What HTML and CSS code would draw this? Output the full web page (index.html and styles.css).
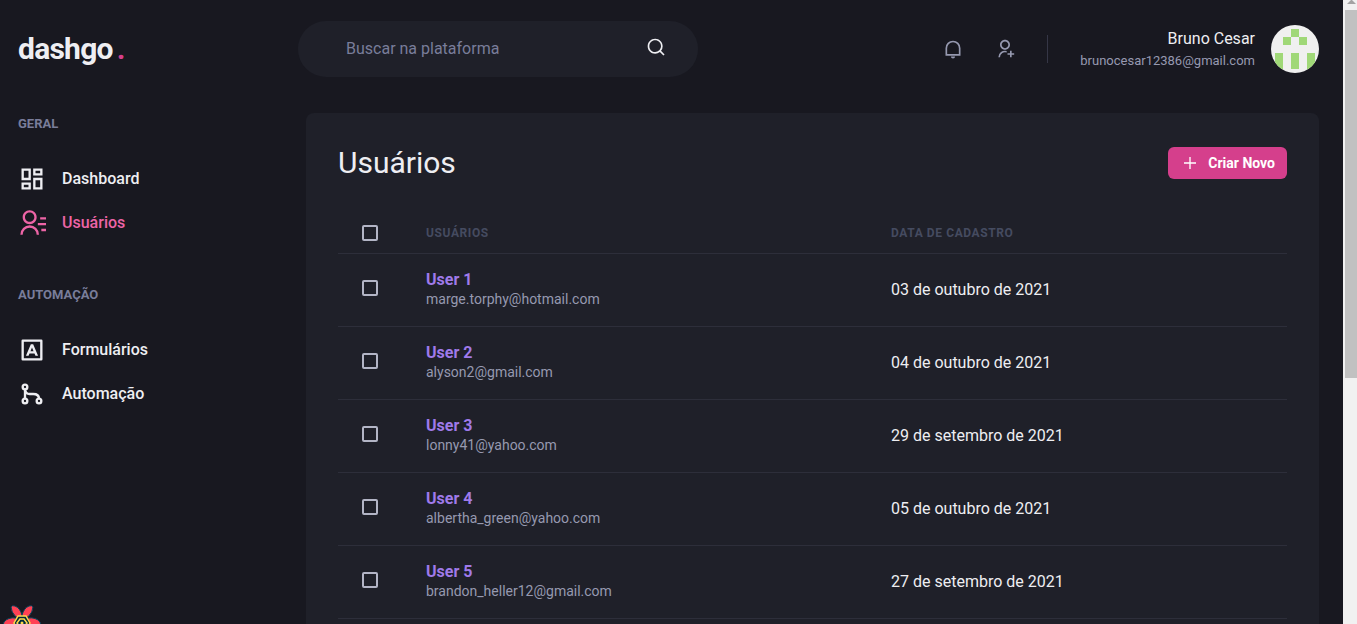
FILE: index.html
```html
<!DOCTYPE html>
<html lang="pt-BR">
<head>
<meta charset="utf-8">
<title>dashgo</title>
<link rel="stylesheet" href="styles.css">
</head>
<body>
<div class="app">
  <header class="header">
    <a class="logo" href="#">dashgo<span class="logo-dot">.</span></a>
    <label class="search">
      <input class="search-input" type="text" placeholder="Buscar na plataforma" aria-label="Buscar na plataforma">
      <svg class="icon-sm search-icon" viewBox="0 0 24 24" fill="currentColor"><path d="M18.031 16.617l4.283 4.282-1.415 1.415-4.282-4.283A8.96 8.96 0 0 1 11 20c-4.968 0-9-4.032-9-9s4.032-9 9-9 9 4.032 9 9a8.96 8.96 0 0 1-1.969 5.617zm-2.006-.742A6.977 6.977 0 0 0 18 11c0-3.868-3.133-7-7-7-3.868 0-7 3.132-7 7 0 3.867 3.132 7 7 7a6.977 6.977 0 0 0 4.875-1.975l.15-.15z"/></svg>
    </label>
    <div class="header-right">
      <div class="actions">
        <button class="icon-button" type="button" aria-label="Notificações">
          <svg class="icon-sm" viewBox="0 0 24 24"><path d="M4 19v-8a8 8 0 0 1 16 0v8z" fill="none" stroke="currentColor" stroke-width="2"/><path d="M9.5 21h5a2.5 2.5 0 0 1-5 0z" fill="currentColor"/></svg>
        </button>
        <button class="icon-button" type="button" aria-label="Adicionar usuário">
          <svg class="icon-sm" viewBox="0 0 24 24" fill="currentColor"><path d="M14 14.252v2.09A6 6 0 0 0 6 22l-2-.001a8 8 0 0 1 10-7.748zM12 13c-3.315 0-6-2.685-6-6s2.685-6 6-6 6 2.685 6 6-2.685 6-6 6zm0-2c2.21 0 4-1.79 4-4s-1.79-4-4-4-4 1.79-4 4 1.79 4 4 4zm6 6v-3h2v3h3v2h-3v3h-2v-3h-3v-2h3z"/></svg>
        </button>
      </div>
      <div class="profile">
        <div class="profile-text">
          <div class="profile-name">Bruno Cesar</div>
          <div class="profile-email">brunocesar12386@gmail.com</div>
        </div>
        <svg class="avatar" viewBox="0 0 48 48" role="img" aria-label="Bruno Cesar"><rect width="48" height="48" fill="#f0f0f0"/><path fill="#a0d878" d="M20 4h8v8h-8zM12 12h8v8h-8zM28 12h8v8h-8zM4 28h8v16H4zM20 28h8v16h-8zM36 28h8v16h-8z"/></svg>
      </div>
    </div>
  </header>

  <div class="body">
    <nav class="sidebar">
      <section class="nav-section">
        <h2 class="nav-title">GERAL</h2>
        <div class="nav-links">
          <a class="nav-link" href="#"><svg class="icon-nav" viewBox="0 0 24 24" fill="currentColor"><path d="M13 21V11h8v10h-8zM3 13V3h8v10H3zm6-2V5H5v6h4zM3 21v-6h8v6H3zm2-2h4v-2H5v2zm10 0h4v-6h-4v6zM13 3h8v6h-8V3zm2 2v2h4V5h-4z"/></svg>Dashboard</a>
          <a class="nav-link nav-link-active" href="#"><svg class="icon-nav" viewBox="0 0 24 24" fill="currentColor"><path d="M19 7h5v2h-5V7zm-2 5h7v2h-7v-2zm3 5h4v2h-4v-2zM2 22a8 8 0 1 1 16 0h-2a6 6 0 1 0-12 0H2zm8-9c-3.315 0-6-2.685-6-6s2.685-6 6-6 6 2.685 6 6-2.685 6-6 6zm0-2c2.21 0 4-1.79 4-4s-1.79-4-4-4-4 1.79-4 4 1.79 4 4 4z"/></svg>Usuários</a>
        </div>
      </section>
      <section class="nav-section">
        <h2 class="nav-title">AUTOMAÇÃO</h2>
        <div class="nav-links">
          <a class="nav-link" href="#"><svg class="icon-nav" viewBox="0 0 24 24" fill="currentColor"><path d="M5 5v14h14V5H5zM4 3h16a1 1 0 0 1 1 1v16a1 1 0 0 1-1 1H4a1 1 0 0 1-1-1V4a1 1 0 0 1 1-1zm5.869 12l-.82 2H6.833L11 7h2l4.167 10H14.95l-.82-2H9.87zm.82-2h2.622L12 9.8 10.689 13z"/></svg>Formulários</a>
          <a class="nav-link" href="#"><svg class="icon-nav" viewBox="0 0 24 24" fill="none" stroke="currentColor" stroke-width="2"><circle cx="6" cy="6" r="2"/><circle cx="6" cy="18" r="2"/><circle cx="18" cy="18" r="2"/><path d="M6 8v8M6 8c.3 2.800 1.500 4 4 4h3c3 0 5 1.500 5 4"/></svg>Automação</a>
        </div>
      </section>
    </nav>

    <main class="card">
      <div class="card-head">
        <h1 class="card-title">Usuários</h1>
        <button class="create" type="button"><svg class="icon-plus" viewBox="0 0 24 24" fill="currentColor"><path d="M11 11V3h2v8h8v2h-8v8h-2v-8H3v-2z"/></svg>Criar Novo</button>
      </div>
      <table class="table">
        <thead>
          <tr><th class="col-check"><input class="check" type="checkbox" aria-label="Selecionar todos"></th><th class="col-user">USUÁRIOS</th><th>DATA DE CADASTRO</th></tr>
        </thead>
        <tbody>
          <tr><td class="col-check"><input class="check" type="checkbox" aria-label="User 1"></td><td><a class="user-name" href="#">User 1</a><div class="user-email">marge.torphy@hotmail.com</div></td><td>03 de outubro de 2021</td></tr>
          <tr><td class="col-check"><input class="check" type="checkbox" aria-label="User 2"></td><td><a class="user-name" href="#">User 2</a><div class="user-email">alyson2@gmail.com</div></td><td>04 de outubro de 2021</td></tr>
          <tr><td class="col-check"><input class="check" type="checkbox" aria-label="User 3"></td><td><a class="user-name" href="#">User 3</a><div class="user-email">lonny41@yahoo.com</div></td><td>29 de setembro de 2021</td></tr>
          <tr><td class="col-check"><input class="check" type="checkbox" aria-label="User 4"></td><td><a class="user-name" href="#">User 4</a><div class="user-email">albertha_green@yahoo.com</div></td><td>05 de outubro de 2021</td></tr>
          <tr><td class="col-check"><input class="check" type="checkbox" aria-label="User 5"></td><td><a class="user-name" href="#">User 5</a><div class="user-email">brandon_heller12@gmail.com</div></td><td>27 de setembro de 2021</td></tr>
        </tbody>
      </table>
    </main>
  </div>
</div>

<div class="scrollbar" aria-hidden="true">
  <svg class="scroll-arrow" viewBox="0 0 12 10"><path d="M6 0h1l4 4H2z" fill="#a3a3a3"/></svg>
  <div class="scroll-thumb"></div>
</div>

<button class="devtools" type="button" aria-label="Abrir devtools">
  <svg class="devtools-logo" viewBox="0 0 40 40">
    <g fill="#ff4154" stroke="#00435b" stroke-width="1">
      <path d="M14 15Q9 10 9 5Q10 3 13 4Q18 6 20 13L18 15z"/>
      <path d="M26 15Q31 10 31 5Q30 3 27 4Q22 6 20 13L22 15z"/>
      <path d="M14 16Q6 15 2 20Q0 23 3 25L14 24z"/>
      <path d="M26 16Q34 15 38 20Q40 23 37 25L26 24z"/>
      <path d="M14 27Q9 32 9 37Q10 39 13 38Q18 36 20 29L18 27z"/>
      <path d="M26 27Q31 32 31 37Q30 39 27 38Q22 36 20 29L22 27z"/>
    </g>
    <path d="M16 14h8l4 7-4 7h-8l-4-7z" fill="#002b3b" stroke="#ffd94c" stroke-width="1.500"/>
    <path d="M18 17h4l3 4-3 4h-4l-3-4z" fill="#002b3b" stroke="#ffd94c" stroke-width="1.500"/>
    <circle cx="20" cy="21" r="1.500" fill="#ffd94c"/>
  </svg>
</button>
</body>
</html>
```
FILE: styles.css
```css
* { box-sizing: border-box; margin: 0; padding: 0; }

body {
  display: flex;
  height: 100vh;
  overflow: hidden;
  background: #181820;
  color: #eeeef2;
  font-family: Roboto, "Liberation Sans", sans-serif;
  font-size: 16px;
  line-height: 24px;
}

button, input { font: inherit; color: inherit; border: 0; background: none; }
a { color: inherit; text-decoration: none; }
svg { display: block; flex: none; }

.app {
  flex: 1;
  min-width: 0;
  display: flex;
  flex-direction: column;
  padding: 0 24px 0 18px;
}

.header {
  display: flex;
  align-items: center;
  padding: 21px 0;
}

.logo {
  width: 256px;
  font-size: 30px;
  line-height: 36px;
  font-weight: 700;
  letter-spacing: -0.025em;
}
.logo-dot { margin-left: 4px; color: #d53f8c; }

.search {
  display: flex;
  align-items: center;
  width: 400px;
  height: 56px;
  margin-left: 24px;
  padding: 0 32px 0 48px;
  border-radius: 28px;
  background: #1f2029;
}
.search-input { flex: 1; min-width: 0; outline: 0; }
.search-input::placeholder { color: #797d9a; opacity: 1; }
.search-icon { margin-bottom: 4px; }

.icon-sm { width: 20px; height: 20px; }
.icon-nav { width: 28px; height: 28px; }
.icon-plus { width: 16px; height: 16px; }

.header-right { display: flex; align-items: center; margin-left: auto; }
.actions {
  display: flex;
  gap: 32px;
  padding: 4px 32px 4px 0;
  border-right: 1px solid #353646;
  color: #9699b0;
}
.profile { display: flex; align-items: center; gap: 16px; padding-left: 32px; }
.profile-text { text-align: right; }
.profile-email { font-size: 13px; line-height: 20px; color: #9699b0; }
.avatar { width: 48px; height: 48px; border-radius: 50%; }

.body { flex: 1; display: flex; gap: 32px; padding-top: 15px; }

.sidebar {
  width: 256px;
  flex: none;
  display: flex;
  flex-direction: column;
  gap: 48px;
  padding-top: 1px;
}
.nav-title { font-size: 13px; line-height: 19px; font-weight: 700; color: #797d9a; }
.nav-links { display: flex; flex-direction: column; gap: 16px; padding-top: 32px; }
.nav-link { display: flex; align-items: center; gap: 16px; font-weight: 500; }
.nav-link-active { color: #ed64a6; }

.card {
  flex: 1;
  min-width: 0;
  padding: 32px;
  border-radius: 8px 8px 0 0;
  background: #1f2029;
}
.card-head {
  display: flex;
  align-items: center;
  justify-content: space-between;
  margin-bottom: 32px;
}
.card-title { font-size: 30px; line-height: 36px; font-weight: 400; }
.create {
  display: flex;
  align-items: center;
  gap: 10px;
  height: 32px;
  padding: 0 12px 0 14px;
  border-radius: 6px;
  background: #d53f8c;
  color: #fff;
  font-size: 14px;
  font-weight: 700;
}

.table { width: 100%; border-collapse: separate; border-spacing: 0; table-layout: fixed; }
.table th, .table td {
  padding: 16px 24px;
  border-bottom: 1px solid #2d2e3a;
  text-align: left;
}
.table th {
  padding: 12px 24px;
  font-size: 12px;
  line-height: 16px;
  font-weight: 700;
  letter-spacing: 0.05em;
  color: #454b60;
}
.table .col-check { width: 64px; padding-right: 0; }
.table td.col-check { padding-bottom: 20px; }
.col-user { width: 49%; }
.check {
  appearance: none;
  display: block;
  width: 16px;
  height: 16px;
  border: 2px solid #b3b5c6;
  border-radius: 2px;
}
.user-name { display: block; line-height: 20px; font-weight: 700; color: #9f7aea; }
.user-email { padding-bottom: 2px; font-size: 14px; line-height: 18px; color: #9699b0; }

.scrollbar { width: 14px; flex: none; padding-left: 2px; background: #f1f1f1; }
.scroll-arrow { width: 12px; height: 10px; }
.scroll-thumb { height: 59vh; background: #c1c1c1; }

.devtools { position: absolute; left: 2px; bottom: -18px; }
.devtools-logo { width: 40px; height: 40px; }
```
